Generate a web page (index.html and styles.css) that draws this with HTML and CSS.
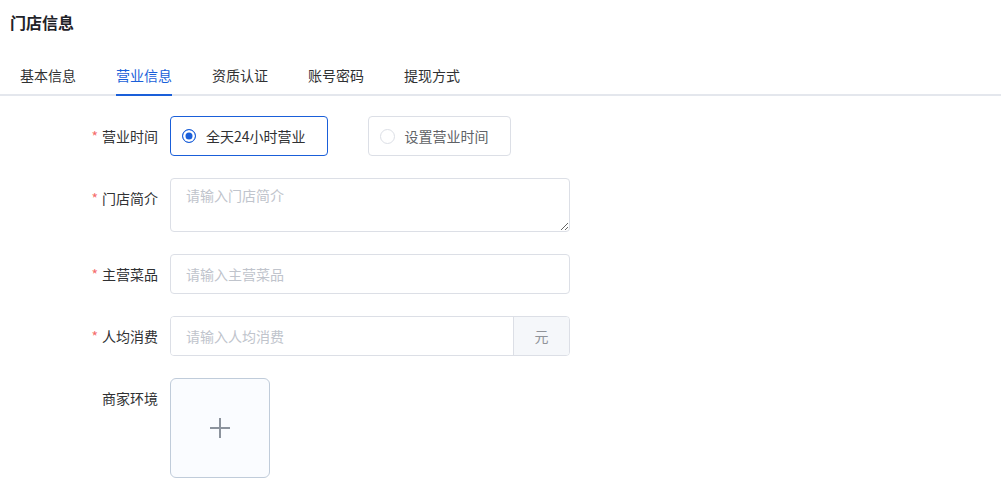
FILE: index.html
```html
<!DOCTYPE html>
<html lang="zh-CN">
<head>
    <meta charset="UTF-8">
    <meta name="viewport" content="width=device-width, initial-scale=1.0">
    <title>门店信息</title>
    <link rel="stylesheet" href="styles.css">
</head>
<body>
    <h1 class="page-title">门店信息</h1>

    <ul class="tabs">
        <li class="tab">基本信息</li>
        <li class="tab active">营业信息</li>
        <li class="tab">资质认证</li>
        <li class="tab">账号密码</li>
        <li class="tab">提现方式</li>
    </ul>

    <form class="form">
        <div class="form-row">
            <label class="form-label required">营业时间</label>
            <div class="form-control radio-group">
                <label class="radio-box checked">
                    <span class="radio-dot"></span>
                    <span>全天24小时营业</span>
                </label>
                <label class="radio-box">
                    <span class="radio-dot"></span>
                    <span>设置营业时间</span>
                </label>
            </div>
        </div>

        <div class="form-row">
            <label class="form-label required">门店简介</label>
            <div class="form-control">
                <textarea class="textarea" placeholder="请输入门店简介"></textarea>
            </div>
        </div>

        <div class="form-row">
            <label class="form-label required">主营菜品</label>
            <div class="form-control">
                <input class="input" type="text" placeholder="请输入主营菜品">
            </div>
        </div>

        <div class="form-row">
            <label class="form-label required">人均消费</label>
            <div class="form-control">
                <div class="input-group">
                    <input class="input-inner" type="text" placeholder="请输入人均消费">
                    <span class="input-suffix">元</span>
                </div>
            </div>
        </div>

        <div class="form-row">
            <label class="form-label">商家环境</label>
            <div class="form-control">
                <div class="upload">
                    <svg width="22" height="22" viewBox="0 0 22 22">
                        <path d="M11 1v20M1 11h20" stroke="#8c939d" stroke-width="2" fill="none"/>
                    </svg>
                </div>
            </div>
        </div>
    </form>
</body>
</html>
```

FILE: styles.css
```css
body {
    margin: 0;
    background: #fff;
    color: #303133;
    font-family: "Noto Sans CJK SC", "Noto Sans", sans-serif;
    font-size: 14px;
}
.page-title {
    margin: 0;
    padding: 10px 10px 0;
    font-size: 16px;
    line-height: 24px;
    font-weight: bold;
    color: #1f2329;
}
.tabs {
    list-style: none;
    margin: 22px 0 0;
    padding: 0;
    display: flex;
    border-bottom: 2px solid #e4e7ed;
}
.tab {
    padding: 0 20px;
    height: 38px;
    line-height: 38px;
    color: #303133;
    margin-bottom: -2px;
    border-bottom: 2px solid transparent;
    cursor: pointer;
}
.tab.active {
    color: #1a5fd9;
    border-bottom-color: #1a5fd9;
    padding: 0;
    margin: 0 20px -2px;
}
.form {
    padding-top: 20px;
}
.form-row {
    display: flex;
    margin-bottom: 22px;
}
.form-label {
    width: 158px;
    padding-right: 12px;
    text-align: right;
    line-height: 40px;
    color: #303133;
    flex-shrink: 0;
}
.form-label.required::before {
    content: "*";
    color: #f56c6c;
    margin-right: 4px;
}
.form-control {
    width: 400px;
}
.radio-group {
    display: flex;
    gap: 40px;
    width: auto;
}
.radio-box {
    display: flex;
    align-items: center;
    gap: 10px;
    height: 38px;
    padding: 0 21px 0 11px;
    border: 1px solid #dcdfe6;
    border-radius: 4px;
    color: #606266;
    cursor: pointer;
}
.radio-box.checked {
    border-color: #1a5fd9;
    color: #303133;
}
.radio-dot {
    width: 13px;
    height: 13px;
    border: 1px solid #dcdfe6;
    border-radius: 50%;
    background: #fff;
}
.radio-box.checked .radio-dot {
    border: 1.5px solid #1a5fd9;
    width: 12px;
    height: 12px;
    background: #1a5fd9;
    box-shadow: inset 0 0 0 2.5px #fff;
}
.textarea {
    display: block;
    box-sizing: border-box;
    width: 400px;
    height: 54px;
    padding: 5px 15px;
    border: 1px solid #dcdfe6;
    border-radius: 4px;
    font-family: inherit;
    font-size: 14px;
    line-height: 22px;
    color: #303133;
    resize: vertical;
    outline: none;
}
.input,
.input-inner {
    box-sizing: border-box;
    height: 40px;
    padding: 0 15px;
    font-family: inherit;
    font-size: 14px;
    color: #303133;
    outline: none;
}
.input {
    display: block;
    width: 400px;
    border: 1px solid #dcdfe6;
    border-radius: 4px;
}
::placeholder {
    color: #c0c4cc;
}
.input-group {
    display: flex;
    box-sizing: border-box;
    width: 400px;
    height: 40px;
    border: 1px solid #dcdfe6;
    border-radius: 4px;
    overflow: hidden;
}
.input-inner {
    flex: 1;
    height: 38px;
    border: none;
    min-width: 0;
}
.input-suffix {
    width: 55px;
    border-left: 1px solid #dcdfe6;
    background: #f5f7fa;
    color: #909399;
    text-align: center;
    line-height: 38px;
}
.upload {
    box-sizing: border-box;
    width: 100px;
    height: 100px;
    border: 1px solid #c0ccda;
    border-radius: 6px;
    background: #fafcff;
    display: flex;
    align-items: center;
    justify-content: center;
    cursor: pointer;
}
```
